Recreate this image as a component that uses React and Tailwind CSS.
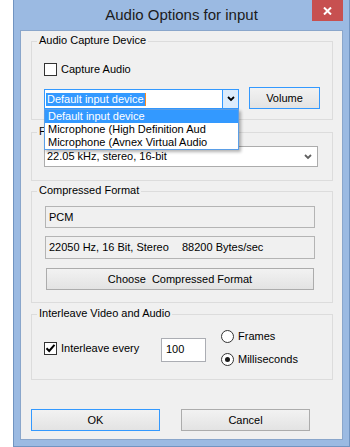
// Audio Options for input — Windows 8 style dialog

function GroupBox({ title, className = '', children }) {
  return (
    <div className={`relative border border-[#dcdcdc] ${className}`}>
      <span className="absolute left-[5px] top-[-8px] bg-[#f0f0f0] px-[2px] leading-[13px]">{title}</span>
      {children}
    </div>
  );
}

function CheckBox({ checked }) {
  return (
    <span className="w-[13px] h-[13px] border border-[#333333] bg-white flex items-center justify-center shrink-0">
      {checked && (
        <svg width="11" height="11" viewBox="0 0 11 11">
          <path d="M1.5 5.2 L4.2 8 L9.5 1.8" stroke="#000" strokeWidth="2" fill="none" />
        </svg>
      )}
    </span>
  );
}

function Radio({ checked }) {
  return (
    <span className="w-[13px] h-[13px] rounded-full border border-[#333333] bg-white flex items-center justify-center shrink-0">
      {checked && <span className="w-[5px] h-[5px] rounded-full bg-[#1a1a1a]" />}
    </span>
  );
}

function Chevron({ color = '#000' }) {
  return (
    <svg width="8" height="6" viewBox="0 0 8 6">
      <path d="M1 1 L4 4 L7 1" stroke={color} strokeWidth="1.8" fill="none" />
    </svg>
  );
}

function Btn({ children, active, className = '' }) {
  return (
    <div
      className={`flex items-center justify-center border bg-gradient-to-b from-[#f2f2f2] to-[#e3e3e3] whitespace-pre ${
        active ? 'border-[#3399ff]' : 'border-[#acacac]'
      } ${className}`}
    >
      {children}
    </div>
  );
}

export default function App() {
  return (
    <div className="w-[350px] h-[447px] bg-white pl-[13px] font-['Liberation_Sans',Arial,sans-serif] text-[11px] text-black">
      <div className="w-[337px] h-[447px] border-x border-b border-[#7194c1] bg-[#9bbae2] flex flex-col px-[6px] pb-[6px]">
        {/* Title bar */}
        <div className="relative h-[30px] shrink-0 flex items-center justify-center">
          <span className="text-[15px] leading-[18px] text-[#1b1b1b]">Audio Options for input</span>
          <div className="absolute right-0 top-0 w-[31px] h-[21px] bg-[#c75050] flex items-center justify-center">
            <svg width="9" height="8" viewBox="0 0 9 8">
              <path d="M1 0.5 L8 7.5 M8 0.5 L1 7.5" stroke="#fff" strokeWidth="2" />
            </svg>
          </div>
        </div>

        {/* Client area */}
        <div className="flex-1 border border-[#8aa6cb] bg-[#f0f0f0] pl-[10px] pt-[10px]">
          {/* Audio Capture Device */}
          <GroupBox title="Audio Capture Device" className="w-[302px] h-[79px] pl-[12px] pt-[21px]">
            <div className="flex items-center h-[13px] gap-[4px]">
              <CheckBox />
              <span>Capture Audio</span>
            </div>
            <div className="flex items-end mt-[11px]">
              <div className="relative w-[195px] h-[20px] border border-[#3399ff] bg-white flex">
                <div className="flex-1 flex items-center pl-[1px]">
                  <span className="bg-[#3399ff] text-white leading-[13px] px-[1px]">Default input device</span>
                  <span className="w-[1px] h-[13px] bg-[#ff8a1c]" />
                </div>
                <div className="w-[16px] border-l border-[#3399ff] bg-[#dcecfc] flex items-center justify-center">
                  <Chevron />
                </div>
                {/* open list */}
                <div className="absolute left-[-1px] top-[19px] w-[195px] border border-[#5b9ee6] bg-white z-10 shadow-[2px_2px_3px_rgba(0,0,0,0.3)]">
                  <div className="h-[13px] leading-[13px] pl-[3px] bg-[#3399ff] text-white">Default input device</div>
                  <div className="h-[13px] leading-[13px] pl-[3px]">Microphone (High Definition Aud</div>
                  <div className="h-[13px] leading-[13px] pl-[3px]">Microphone (Avnex Virtual Audio</div>
                </div>
              </div>
              <Btn active className="ml-[10px] w-[71px] h-[22px]">Volume</Btn>
            </div>
          </GroupBox>

          {/* Format */}
          <GroupBox title="Format" className="mt-[12px] w-[302px] h-[49px] pl-[12px] pt-[13px]">
            <div className="w-[274px] h-[21px] border border-[#acacac] bg-white flex items-center justify-between pl-[2px] pr-[5px]">
              <span>22.05 kHz, stereo, 16-bit</span>
              <Chevron color="#606060" />
            </div>
          </GroupBox>

          {/* Compressed Format */}
          <GroupBox title="Compressed Format" className="mt-[10px] w-[302px] h-[112px] pl-[13px] pt-[14px]">
            <div className="w-[270px] h-[22px] border border-[#b4b4b4] flex items-center pl-[3px]">PCM</div>
            <div className="mt-[8px] w-[270px] h-[23px] border border-[#b4b4b4] flex items-center pl-[3px]">
              <span className="w-[133px]">22050 Hz, 16 Bit, Stereo</span>
              <span>88200 Bytes/sec</span>
            </div>
            <Btn className="mt-[9px] ml-[1px] w-[268px] h-[22px]">Choose  Compressed Format</Btn>
          </GroupBox>

          {/* Interleave */}
          <GroupBox title="Interleave Video and Audio" className="mt-[11px] w-[302px] h-[66px] pl-[12px] pt-[15px]">
            <div className="flex items-center h-[36px]">
              <div className="w-[117px] flex items-center gap-[4px]">
                <CheckBox checked />
                <span>Interleave every</span>
              </div>
              <div className="mt-[3px] w-[45px] h-[24px] border border-[#abadb3] bg-white flex items-center pl-[4px]">100</div>
              <div className="ml-[15px] flex flex-col gap-[10px]">
                <div className="flex items-center h-[13px] gap-[4px]">
                  <Radio />
                  <span>Frames</span>
                </div>
                <div className="flex items-center h-[13px] gap-[4px]">
                  <Radio checked />
                  <span>Milliseconds</span>
                </div>
              </div>
            </div>
          </GroupBox>

          {/* Dialog buttons */}
          <div className="mt-[29px] flex gap-[21px]">
            <Btn active className="w-[129px] h-[22px]">OK</Btn>
            <Btn className="w-[129px] h-[22px]">Cancel</Btn>
          </div>
        </div>
      </div>
    </div>
  );
}
